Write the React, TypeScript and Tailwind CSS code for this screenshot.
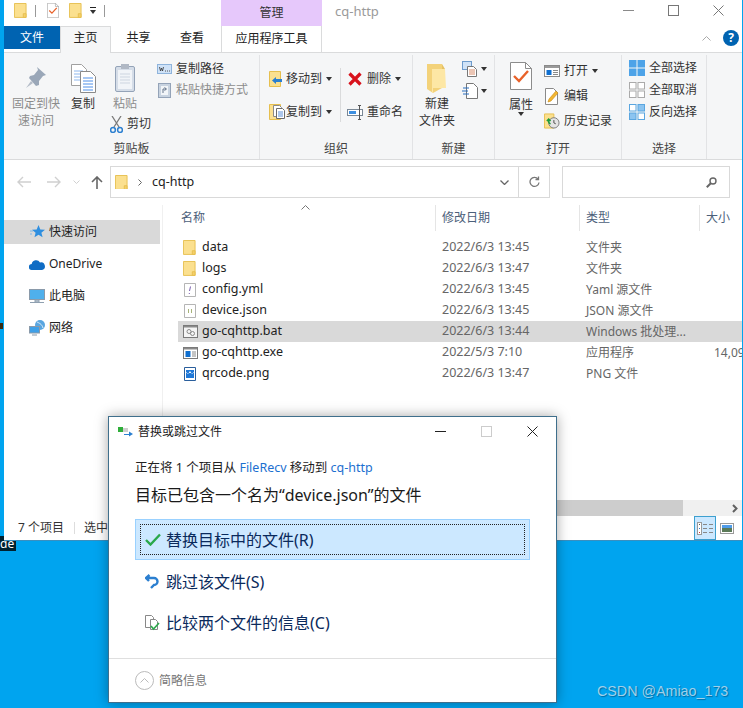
import type { ReactNode } from "react";

const sans = "font-['Noto_Sans','Noto_Sans_CJK_SC',sans-serif]";

function Folder({ size = 14 }: { size?: number }) {
  return (
    <svg width={size} height={size * 1.15} viewBox="0 0 14 16" className="shrink-0">
      <path d="M.5.5h12.5v15H.5z" fill="#fbe08f" stroke="#e6bf4f" />
      <path d="M10 11.5h3v4h-3z" fill="#f5d06a" stroke="#e6bf4f" />
    </svg>
  );
}

function PropsDoc({ w = 22, h = 28 }: { w?: number; h?: number }) {
  return (
    <svg width={w} height={h} viewBox="0 0 22 28" className="shrink-0">
      <path d="M.5.5h15l6 6v21H.5z" fill="#fff" stroke="#8c8c8c" />
      <path d="M15.5.5v6h6" fill="none" stroke="#8c8c8c" />
      <path d="M4 14l5 5 9-10" fill="none" stroke="#e8622a" strokeWidth="2.4" />
    </svg>
  );
}

function Caret() {
  return <span className="inline-block w-0 h-0 border-x-[3.5px] border-x-transparent border-t-[4px] border-t-[#333]" />;
}

function WinBtn({ kind, color }: { kind: "min" | "max" | "close"; color: string }) {
  return (
    <svg width="11" height="11" viewBox="0 0 11 11" fill="none" stroke={color}>
      {kind === "min" && <path d="M0 5.5h11" />}
      {kind === "max" && <rect x=".5" y=".5" width="10" height="10" />}
      {kind === "close" && <path d="M.5.5l10 10M10.5.5l-10 10" />}
    </svg>
  );
}

function Group({ width, label, children }: { width: string; label: string; children: ReactNode }) {
  return (
    <div className={`flex flex-col shrink-0 border-r border-[#e2e3e5] mt-[2px] ${width}`}>
      <div className="h-[84px] flex">{children}</div>
      <div className="h-[20px] leading-[20px] text-center text-[#444]">{label}</div>
    </div>
  );
}

function Big({ icon, lines, disabled, className = "" }: { icon: ReactNode; lines: string[]; disabled?: boolean; className?: string }) {
  return (
    <div className={`flex flex-col items-center shrink-0 pt-[7px] ${className}`}>
      <div className="h-[32px] flex items-center justify-center">{icon}</div>
      <div className={`mt-[1px] text-center leading-[17px] whitespace-nowrap ${disabled ? "text-[#8c8c8c]" : "text-[#333]"}`}>
        {lines.map((l) => (
          <div key={l}>{l}</div>
        ))}
      </div>
    </div>
  );
}

function Small({ icon, label, caret, disabled, tight }: { icon: ReactNode; label: string; caret?: boolean; disabled?: boolean; tight?: boolean }) {
  return (
    <div className={`flex items-center gap-[4px] h-[20px] whitespace-nowrap ${disabled ? "text-[#8c8c8c]" : "text-[#333]"}`}>
      <span className={`w-[16px] flex justify-center shrink-0 ${tight ? "-mr-[3px]" : ""}`}>{icon}</span>
      <span>{label}</span>
      {caret && (
        <span className="flex">
          <Caret />
        </span>
      )}
    </div>
  );
}

const PinIcon = (
  <svg width="22" height="24" viewBox="0 0 22 24">
    <path d="M12 1l9 8-3 1-4 5 0 4-3 1-7-8 1-2 4-1 4-5z" fill="#9aa7b8" />
    <path d="M6 15l-5 7 7-5z" fill="#b4bcc8" />
  </svg>
);

const CopyIcon = (
  <svg width="25" height="29" viewBox="0 0 25 29">
    <path d="M.5.5h10l5 5v16H.5z" fill="#fff" stroke="#a0a0a0" />
    <path d="M3 7h9M3 10h9M3 13h9M3 16h9" stroke="#8fb8ee" />
    <path d="M9.5 7.5h10l5 5v16h-15z" fill="#fff" stroke="#8a8a8a" />
    <path d="M12 14h10M12 17h10M12 20h10M12 23h10M12 26h10" stroke="#4f8fe8" />
  </svg>
);

const PasteIcon = (
  <svg width="20" height="30" viewBox="0 0 20 30">
    <rect x=".5" y="3.5" width="19" height="25" rx="1.5" fill="#d5dde8" stroke="#94a3b8" />
    <rect x="3" y="7" width="14" height="19" fill="#f1f4f8" />
    <path d="M5 11h10M5 14h10M5 17h10M5 20h10" stroke="#cdd5e0" />
    <rect x="6" y="1" width="8" height="5" fill="#b0b8c4" />
  </svg>
);

const Scissors = (
  <svg width="13" height="17" viewBox="0 0 13 17" fill="none" className="shrink-0">
    <path d="M2 0l7 11M11 0L4 11" stroke="#7a7a7a" strokeWidth="1.3" />
    <circle cx="3" cy="14" r="2.4" stroke="#2b7fd0" strokeWidth="1.5" />
    <circle cx="10" cy="14" r="2.4" stroke="#2b7fd0" strokeWidth="1.5" />
  </svg>
);

const PathIcon = (
  <svg width="15" height="10" viewBox="0 0 15 10">
    <rect x=".5" y=".5" width="14" height="9" fill="#cfe2f7" stroke="#8fb4dc" />
    <path d="M2.5 3l1 4 1-3 1 3 1-4M8 7h1M10 7h1M12 7h1" stroke="#333" strokeWidth=".8" fill="none" />
  </svg>
);

const ShortcutIcon = (
  <svg width="13" height="16" viewBox="0 0 13 16">
    <rect x=".5" y="1.5" width="12" height="14" fill="#c8d3e0" stroke="#94a3b8" />
    <rect x="3" y="4" width="7" height="9" fill="#f2f5f8" />
    <path d="M5 11V7h3M6.5 5.5L8.5 7 6.5 8.5" stroke="#64748b" fill="none" />
  </svg>
);

const MoveIcon = (
  <svg width="16" height="16" viewBox="0 0 16 16">
    <path d="M.5.5h11v15H.5z" fill="#fbe08f" stroke="#e6bf4f" />
    <path d="M13 8H7V6l-4 3.5L7 13v-2h6z" fill="#2b7fd0" />
  </svg>
);

const CopyToIcon = (
  <svg width="16" height="16" viewBox="0 0 16 16">
    <path d="M.5.5h11v15H.5z" fill="#fbe08f" stroke="#e6bf4f" />
    <path d="M4.5 1.5h6l2 2v9h-8z" fill="#fff" stroke="#8a8a8a" />
    <path d="M7.5 4.5h6l2 2v8h-8z" fill="#fff" stroke="#6b6b6b" />
    <path d="M9 8h5M9 10h5M9 12h5" stroke="#5a8fd8" />
  </svg>
);

const DeleteIcon = (
  <svg width="14" height="14" viewBox="0 0 14 14">
    <path d="M1.5 1.5l11 11M12.5 1.5l-11 11" stroke="#d8121c" strokeWidth="3.2" />
  </svg>
);

const RenameIcon = (
  <svg width="16" height="15" viewBox="0 0 16 15">
    <rect x=".5" y="4.5" width="15" height="6" fill="#fff" stroke="#7a8896" />
    <rect x="2" y="6" width="7" height="3" fill="#3d8fe0" />
    <path d="M11 .5h3M12.5.5v14M11 14.5h3" stroke="#555" fill="none" />
  </svg>
);

const BigFolder = (
  <svg width="20" height="29" viewBox="0 0 20 29">
    <path d="M0 0h15v24L6 29 0 25z" fill="#f3d27a" />
    <path d="M5 5h13l1 19H6v5l-1-1z" fill="#fde7a5" />
    <path d="M15 0l3 5h-3z" fill="#e6c264" />
  </svg>
);

const NewItemIcon = (
  <svg width="16" height="16" viewBox="0 0 16 16">
    <rect x=".5" y=".5" width="9" height="8" fill="#cfe2f7" stroke="#6d9bcc" />
    <path d="M5.5 5.5h6l3 3v7h-9z" fill="#fff" stroke="#777" />
    <path d="M7 9h6M7 11h6M7 13h6" stroke="#d88c6a" />
  </svg>
);

const EasyAccessIcon = (
  <svg width="16" height="16" viewBox="0 0 16 16">
    <path d="M4.5.5h7l4 4v11h-11z" fill="#fff" stroke="#777" />
    <path d="M1 5h6M0 8h6M1 11h6" stroke="#2b6fc0" strokeWidth="1.2" />
  </svg>
);

const OpenIcon = (
  <svg width="16" height="12" viewBox="0 0 16 12">
    <rect x=".5" y=".5" width="15" height="11" fill="#fff" stroke="#8a8a8a" />
    <path d="M1 1h14v2H1z" fill="#9a9a9a" />
    <rect x="2.5" y="5" width="5" height="5" fill="#0f6fd0" />
    <path d="M9 5.5h5M9 7.5h5M9 9.5h5" stroke="#8a8a8a" />
  </svg>
);

const EditIcon = (
  <svg width="14" height="17" viewBox="0 0 14 17">
    <path d="M.5.5h8l4 4v12H.5z" fill="#fff" stroke="#8a8a8a" />
    <path d="M3 14l1-3 7-8 2 2-7 8z" fill="#f2b632" stroke="#c98a12" strokeWidth=".6" />
  </svg>
);

const HistoryIcon = (
  <svg width="17" height="16" viewBox="0 0 17 16">
    <path d="M.5.5h10v15H.5z" fill="#fbe08f" stroke="#e6bf4f" />
    <circle cx="10.5" cy="10" r="5.5" fill="#e4e4e4" stroke="#7a7a7a" />
    <path d="M10.5 7v3l2 1" stroke="#444" fill="none" />
    <path d="M7 11a3 3 0 0 1-2-4M3 8l2-2 2 2" stroke="#1f9d3a" strokeWidth="1.6" fill="none" />
  </svg>
);

function Grid4({ fills, stroke }: { fills: string[]; stroke: string }) {
  return (
    <svg width="16" height="16" viewBox="0 0 16 16">
      {[
        [0.5, 0.5],
        [9, 0.5],
        [0.5, 9],
        [9, 9],
      ].map(([x, y], i) => (
        <rect key={i} x={x} y={y} width="6.5" height="6.5" fill={fills[i]} stroke={stroke} />
      ))}
    </svg>
  );
}

function FileIcon({ kind }: { kind: string }) {
  if (kind === "folder") return <Folder size={13} />;
  if (kind === "yml" || kind === "json")
    return (
      <svg width="12" height="14" viewBox="0 0 12 14" className="shrink-0 ml-[1px]">
        <path d="M.5.5h11v13H.5z" fill="#fff" stroke="#b5b5b5" />
        {kind === "yml" ? (
          <path d="M6.5 3.5L5.5 8M5.3 10v1" stroke="#7a5fb0" fill="none" />
        ) : (
          <path d="M4.5 5v4M7.5 5v4" stroke="#a8b37a" fill="none" />
        )}
      </svg>
    );
  if (kind === "bat")
    return (
      <svg width="15" height="13" viewBox="0 0 15 13" className="shrink-0">
        <rect x=".5" y=".5" width="14" height="12" fill="#f4f4f4" stroke="#7a7a7a" />
        <path d="M1 1h13v1.5H1z" fill="#8a8a8a" />
        <circle cx="6" cy="6.5" r="2" fill="none" stroke="#8a8a8a" />
        <circle cx="9.5" cy="8.5" r="2" fill="none" stroke="#8a8a8a" />
      </svg>
    );
  if (kind === "exe")
    return (
      <svg width="15" height="12" viewBox="0 0 15 12" className="shrink-0">
        <rect x=".5" y=".5" width="14" height="11" fill="#fff" stroke="#7a7a7a" />
        <path d="M1 1h13v1.5H1z" fill="#8a8a8a" />
        <rect x="2.5" y="4" width="5" height="6" fill="#0f6fd0" />
        <path d="M9 5h4M9 7h4M9 9h4" stroke="#8a8a8a" />
      </svg>
    );
  return (
    <svg width="12" height="14" viewBox="0 0 12 14" className="shrink-0 ml-[1px]">
      <path d="M.5.5h11v13H.5z" fill="#fff" stroke="#2a5f9c" />
      <rect x="2" y="3" width="8" height="8" fill="#1f78d8" />
      <path d="M2 5l2 2 2-3 2 3 2-2v1H2z" fill="#fff" />
    </svg>
  );
}

const files = [
  { name: "data", kind: "folder", date: "2022/6/3 13:45", type: "文件夹", size: "" },
  { name: "logs", kind: "folder", date: "2022/6/3 13:47", type: "文件夹", size: "" },
  { name: "config.yml", kind: "yml", date: "2022/6/3 13:45", type: "Yaml 源文件", size: "" },
  { name: "device.json", kind: "json", date: "2022/6/3 13:45", type: "JSON 源文件", size: "" },
  { name: "go-cqhttp.bat", kind: "bat", date: "2022/6/3 13:44", type: "Windows 批处理...", size: "" },
  { name: "go-cqhttp.exe", kind: "exe", date: "2022/5/3 7:10", type: "应用程序", size: "14,09" },
  { name: "qrcode.png", kind: "png", date: "2022/6/3 13:47", type: "PNG 文件", size: "" },
];

const sideItems = [
  {
    label: "快速访问",
    active: true,
    icon: (
      <svg width="15" height="14" viewBox="0 0 15 14">
        <path d="M8.5 0l1.8 4.4 4.7.3-3.6 3 1.2 4.6-4.1-2.5-4 2.5 1.1-4.6L2 4.7l4.7-.3z" fill="#2f8fe0" />
        <path d="M0 6h3M0 9h2" stroke="#7db8ea" />
      </svg>
    ),
  },
  {
    label: "OneDrive",
    icon: (
      <svg width="16" height="11" viewBox="0 0 16 11">
        <path d="M3 11a3 3 0 0 1-.3-6A4.5 4.5 0 0 1 11 3.5 3.7 3.7 0 0 1 13 11z" fill="#0f6cc4" />
      </svg>
    ),
  },
  {
    label: "此电脑",
    icon: (
      <svg width="16" height="15" viewBox="0 0 16 15">
        <rect x=".5" y=".5" width="15" height="10" fill="#4fb0ec" stroke="#8a9aaa" />
        <path d="M6 11h4v2H6zM1 13.5h14" stroke="#8fa0b0" fill="#c4ced8" />
      </svg>
    ),
  },
  {
    label: "网络",
    icon: (
      <svg width="16" height="16" viewBox="0 0 16 16">
        <circle cx="11" cy="5" r="5" fill="#5aa6e0" />
        <path d="M8 2c2 1 5 2 6 6" stroke="#e4f0fa" fill="none" />
        <rect x=".5" y="6.5" width="10" height="6.5" fill="#3fa0e8" stroke="#8a9aaa" />
        <path d="M3 15h5" stroke="#8a9aaa" />
      </svg>
    ),
  },
];

function Explorer() {
  return (
    <div className="absolute left-[4px] top-0 w-[738px] h-[541px] bg-white flex flex-col overflow-hidden border-b border-[#3a8fbf] text-[12px]">
      {/* title bar */}
      <div className="h-[26px] flex items-start shrink-0">
        <div className="flex items-center pl-[10px] pt-[3px] w-[217px]">
          <Folder size={13} />
          <span className="ml-[8px] w-px h-[12px] bg-[#999]" />
          <span className="ml-[11px] flex">
            <PropsDoc w={12} h={15} />
          </span>
          <span className="ml-[10px] flex">
            <Folder size={13} />
          </span>
          <span className="ml-[8px] flex flex-col items-center gap-[2px]">
            <span className="w-[6px] h-px bg-[#222]" />
            <Caret />
          </span>
          <span className="ml-[8px] w-px h-[12px] bg-[#999]" />
        </div>
        <div className="w-[101px] h-[26px] bg-[#e6c8fb] text-center leading-[25px] text-[#333]">管理</div>
        <div className="ml-[13px] leading-[23px] text-[#9a9a9a] text-[13px] flex-1">cq-http</div>
        <div className="flex items-center gap-[34px] pt-[5px] pr-[18px]">
          <WinBtn kind="min" color="#8a8a8a" />
          <WinBtn kind="max" color="#777" />
          <WinBtn kind="close" color="#777" />
        </div>
      </div>

      {/* tabs */}
      <div className="h-[27px] shrink-0 flex items-start border-b border-[#dadbdc] relative">
        <div className="w-[56px] h-[23px] bg-[#0063b1] text-white text-center leading-[23px]">文件</div>
        <div className="w-[51px] h-[27px] bg-[#f5f6f7] border-x border-t border-[#dadbdc] text-center leading-[22px] text-[#222] z-10">主页</div>
        <div className="w-[55px] text-center leading-[23px] text-[#222]">共享</div>
        <div className="w-[52px] text-center leading-[23px] text-[#222]">查看</div>
        <div className="ml-[3px] w-[101px] h-[26px] border-x border-[#dadbdc] text-center leading-[25px] text-[#222]">应用程序工具</div>
        <div className="ml-auto flex items-center gap-[12px] pr-[3px] pt-[4px]">
          <svg width="9" height="5" viewBox="0 0 9 5" fill="none" stroke="#aaa">
            <path d="M.5 4.5l4-4 4 4" />
          </svg>
          <span className="w-[16px] h-[16px] rounded-full bg-[#0063b1] text-white font-bold text-[12px] leading-[16px] text-center">?</span>
        </div>
      </div>

      {/* ribbon */}
      <div className="h-[107px] shrink-0 bg-[#f5f6f7] border-b border-[#dadbdc] flex">
        <Group width="w-[256px]" label="剪贴板">
          <Big className="ml-[8px] w-[48px]" icon={PinIcon} lines={["固定到快", "速访问"]} disabled />
          <Big className="ml-[8px] w-[30px]" icon={CopyIcon} lines={["复制"]} />
          <div className="ml-[8px] w-[38px] shrink-0">
            <Big icon={PasteIcon} lines={["粘贴"]} disabled />
            <div className="pl-[4px] mt-[3px]">
              <div className="flex items-center gap-[4px] whitespace-nowrap text-[#333]">
                {Scissors}
                <span>剪切</span>
              </div>
            </div>
          </div>
          <div className="ml-[12px] pt-[4px] flex flex-col gap-[1px]">
            <Small icon={PathIcon} label="复制路径" />
            <Small icon={ShortcutIcon} label="粘贴快捷方式" disabled />
          </div>
        </Group>

        <Group width="w-[153px]" label="组织">
          <div className="ml-[9px] pt-[14px] w-[71px] flex flex-col gap-[13px]">
            <Small icon={MoveIcon} label="移动到" caret tight />
            <Small icon={CopyToIcon} label="复制到" caret tight />
          </div>
          <div className="mt-[13px] mb-[17px] w-px bg-[#dadbdc]" />
          <div className="ml-[6px] pt-[14px] flex flex-col gap-[13px]">
            <Small icon={DeleteIcon} label="删除" caret />
            <Small icon={RenameIcon} label="重命名" />
          </div>
        </Group>

        <Group width="w-[82px]" label="新建">
          <Big className="ml-[6px] w-[36px]" icon={BigFolder} lines={["新建", "文件夹"]} />
          <div className="ml-[7px] pt-[6px] flex flex-col gap-[6px]">
            <div className="flex items-center gap-[3px] h-[16px]">
              {NewItemIcon}
              <Caret />
            </div>
            <div className="flex items-center gap-[3px] h-[16px]">
              {EasyAccessIcon}
              <Caret />
            </div>
          </div>
        </Group>

        <Group width="w-[127px]" label="打开">
          <div className="ml-[14px] w-[24px] flex flex-col items-center pt-[7px] shrink-0">
            <PropsDoc />
            <div className="mt-[8px] text-[#333] leading-[14px] whitespace-nowrap">属性</div>
            <Caret />
          </div>
          <div className="ml-[11px] pt-[6px] flex flex-col gap-[5px]">
            <Small icon={OpenIcon} label="打开" caret />
            <Small icon={EditIcon} label="编辑" />
            <Small icon={HistoryIcon} label="历史记录" />
          </div>
        </Group>

        <Group width="w-[85px]" label="选择">
          <div className="ml-[7px] pt-[3px] flex flex-col gap-[2px]">
            <Small icon={<Grid4 fills={["#4da3e8", "#4da3e8", "#4da3e8", "#4da3e8"]} stroke="#4da3e8" />} label="全部选择" />
            <Small icon={<Grid4 fills={["#fff", "#fff", "#fff", "#fff"]} stroke="#aaa" />} label="全部取消" />
            <Small icon={<Grid4 fills={["#fff", "#8cc4f0", "#8cc4f0", "#fff"]} stroke="#5aa6e0" />} label="反向选择" />
          </div>
        </Group>
      </div>

      {/* nav bar */}
      <div className="h-[32px] mt-[6px] shrink-0 flex items-center">
        <svg width="14" height="12" viewBox="0 0 14 12" fill="none" stroke="#d0d0d0" strokeWidth="1.4" className="ml-[13px]">
          <path d="M14 6H1M6 1L1 6l5 5" />
        </svg>
        <svg width="14" height="12" viewBox="0 0 14 12" fill="none" stroke="#d0d0d0" strokeWidth="1.4" className="ml-[16px]">
          <path d="M0 6h13M8 1l5 5-5 5" />
        </svg>
        <svg width="7" height="4" viewBox="0 0 7 4" fill="none" stroke="#d0d0d0" className="ml-[12px]">
          <path d="M.5.5l3 3 3-3" />
        </svg>
        <svg width="12" height="13" viewBox="0 0 12 13" fill="none" stroke="#666" strokeWidth="1.6" className="ml-[11px]">
          <path d="M6 13V1M1 6l5-5 5 5" />
        </svg>
        <div className="ml-[7px] w-[440px] h-[32px] border border-[#d9d9d9] flex items-center">
          <span className="ml-[4px] flex">
            <Folder size={13} />
          </span>
          <svg width="4" height="7" viewBox="0 0 4 7" fill="none" stroke="#666" className="ml-[10px]">
            <path d="M.5.5l3 3-3 3" />
          </svg>
          <span className="ml-[10px] text-[#222] text-[12.5px] flex-1">cq-http</span>
          <svg width="9" height="5" viewBox="0 0 9 5" fill="none" stroke="#666" strokeWidth="1.3" className="mr-[9px]">
            <path d="M.5.5l4 4 4-4" />
          </svg>
          <div className="w-[31px] h-full border-l border-[#d9d9d9] flex items-center justify-center">
            <svg width="11" height="12" viewBox="0 0 11 12" fill="none" stroke="#777" strokeWidth="1.3">
              <path d="M9 3a4.5 4.5 0 1 0 1 3.5M9.5.5V3.5H6.5" />
            </svg>
          </div>
        </div>
        <div className="ml-[12px] w-[168px] h-[32px] border border-[#d9d9d9] flex items-center justify-end pr-[12px]">
          <svg width="11" height="11" viewBox="0 0 11 11" fill="none" stroke="#666" strokeWidth="1.4">
            <circle cx="7" cy="4" r="3" />
            <path d="M4.8 6.2L.8 10.2" strokeWidth="2" />
          </svg>
        </div>
      </div>

      {/* main */}
      <div className="flex flex-1 min-h-0 mt-[7px]">
        <div className="w-[159px] shrink-0 pt-[15px] border-r border-[#f0f0f0] flex flex-col gap-[8px]">
          {sideItems.map((s) => (
            <div key={s.label} className={`h-[24px] flex items-center w-[156px] ${s.active ? "bg-[#d9d9d9]" : ""}`}>
              <span className="ml-[25px] w-[16px] flex justify-center">{s.icon}</span>
              <span className="ml-[4px] text-[#222]">{s.label}</span>
            </div>
          ))}
        </div>
        <div className="flex-1 min-w-0 flex flex-col pl-[15px]">
          <div className="h-[26px] grid grid-cols-[257px_144px_120px_1fr] text-[#4c607a] shrink-0 relative">
            <div className="pl-[3px] leading-[26px]">名称</div>
            <svg width="9" height="5" viewBox="0 0 9 5" fill="none" stroke="#777" className="absolute left-[123px] top-0">
              <path d="M.5 4.5l4-4 4 4" />
            </svg>
            <div className="pl-[6px] border-l border-[#e5e5e5] leading-[26px]">修改日期</div>
            <div className="pl-[6px] border-l border-[#e5e5e5] leading-[26px]">类型</div>
            <div className="pl-[6px] border-l border-[#e5e5e5] leading-[26px]">大小</div>
          </div>
          <div className="mt-[6px] flex flex-col">
            {files.map((f) => (
              <div
                key={f.name}
                className={`h-[21px] grid grid-cols-[257px_144px_120px_1fr] items-center whitespace-nowrap ${f.kind === "bat" ? "bg-[#d9d9d9]" : ""}`}
              >
                <div className="flex items-center pl-[5px]">
                  <span className="w-[19px] flex shrink-0">
                    <FileIcon kind={f.kind} />
                  </span>
                  <span className="text-[#222] text-[12.5px]">{f.name}</span>
                </div>
                <div className="pl-[7px] text-[#666] text-[12.5px]">{f.date}</div>
                <div className="pl-[7px] text-[#666]">{f.type}</div>
                <div className="pl-[15px] text-[#666] overflow-hidden">{f.size}</div>
              </div>
            ))}
          </div>
          <div className="mt-auto h-[16px] flex bg-[#f0f0f0] shrink-0">
            <div className="w-[505px] bg-[#cdcdcd]" />
            <div className="ml-auto pr-[4px] flex items-center">
              <svg width="6" height="9" viewBox="0 0 6 9" fill="none" stroke="#606060" strokeWidth="2">
                <path d="M1 1l3.5 3.5L1 8" />
              </svg>
            </div>
          </div>
        </div>
      </div>

      {/* status bar */}
      <div className="h-[24px] shrink-0 flex items-center text-[#333]">
        <span className="ml-[14px]">7 个项目</span>
        <span className="ml-[10px] w-px h-[12px] bg-[#ddd]" />
        <span className="ml-[9px]">选中</span>
        <div className="ml-auto flex items-center h-full pr-[8px]">
          <div className="w-[22px] h-full bg-[#cce8ff] border border-[#3da0d0] flex items-center justify-center">
            <svg width="16" height="13" viewBox="0 0 16 13">
              <rect x=".5" y=".5" width="4" height="12" fill="#fff" stroke="#999" />
              <path d="M2 2.5h1" stroke="#555" />
              <path d="M2 6.5h1" stroke="#2b7fd0" />
              <path d="M2 10.5h1" stroke="#d03030" />
              <path d="M6 2.5h4M12 2.5h4M6 6.5h4M12 6.5h4M6 10.5h4M12 10.5h4" stroke="#888" />
            </svg>
          </div>
          <div className="ml-[4px]">
            <svg width="14" height="11" viewBox="0 0 14 11">
              <rect x=".5" y=".5" width="13" height="10" fill="#fff" stroke="#999" />
              <rect x="2" y="2" width="10" height="3" fill="#4f9be8" />
              <rect x="2" y="5" width="10" height="4" fill="#5b7a58" />
            </svg>
          </div>
        </div>
      </div>
    </div>
  );
}

function Dialog() {
  return (
    <div className="absolute left-[108px] top-[416px] w-[449px] h-[287px] bg-white border border-[#3f6f8c] shadow-[0_0_12px_rgba(0,0,0,0.35)] flex flex-col text-[12px]">
      <div className="h-[29px] shrink-0 flex items-center">
        <svg width="15" height="10" viewBox="0 0 15 10" className="ml-[9px]">
          <rect x="0" y="0" width="5" height="5" fill="#2fae3a" />
          <rect x="5" y="1" width="5" height="4" fill="#cfcfcf" />
          <path d="M6 7h5V4.5L15 7l-4 2.5V8H6z" fill="#2b7fd0" />
        </svg>
        <span className="ml-[5px] text-[#222]">替换或跳过文件</span>
        <div className="ml-auto flex items-center gap-[35px] pr-[18px]">
          <WinBtn kind="min" color="#222" />
          <WinBtn kind="max" color="#ccc" />
          <WinBtn kind="close" color="#222" />
        </div>
      </div>
      <div className="pl-[26px] pr-[26px] pt-[13px] flex flex-col flex-1">
        <div className="h-[18px] leading-[18px] text-[12.5px] text-[#222] whitespace-nowrap">
          正在将 1 个项目从 <span className="text-[#1c6fd0]">FileRecv</span> 移动到 <span className="text-[#1c6fd0]">cq-http</span>
        </div>
        <div className="mt-[7px] h-[22px] leading-[22px] text-[16px] text-[#1a1a1a] whitespace-nowrap">目标已包含一个名为“device.json”的文件</div>
        <div className="mt-[13px] h-[41px] bg-[#cce8ff] border border-[#99d1ff] p-[4px]">
          <div className="h-full border border-dotted border-[#222] flex items-center pl-[4px] text-[16px] text-[#0a2a5c]">
            <svg width="16" height="13" viewBox="0 0 16 13" fill="none" stroke="#2aa84a" strokeWidth="2.4">
              <path d="M1 7l4.5 4.5L15 1.5" />
            </svg>
            <span className="ml-[5px]">替换目标中的文件(R)</span>
          </div>
        </div>
        <div className="mt-[1px] h-[41px] flex items-center pl-[10px] text-[16px] text-[#0a2a5c]">
          <svg width="14" height="15" viewBox="0 0 14 15" fill="none" stroke="#2b7fd0" strokeWidth="2.4">
            <path d="M1 4h8a3.5 3.5 0 0 1 0 7L6 14M4.5 1L1 4l3 3" />
          </svg>
          <span className="ml-[7px]">跳过该文件(S)</span>
        </div>
        <div className="h-[41px] flex items-center pl-[10px] text-[16px] text-[#0a2a5c]">
          <svg width="15" height="16" viewBox="0 0 15 16" fill="none">
            <path d="M.5.5h6l2 2v10h-8z" fill="#fff" stroke="#888" />
            <path d="M5.5 4.5h5l2 2v8h-7z" fill="#fff" stroke="#888" />
            <path d="M6 11l2.5 3L14 8" stroke="#2aa84a" strokeWidth="1.6" />
          </svg>
          <span className="ml-[6px]">比较两个文件的信息(C)</span>
        </div>
      </div>
      <div className="h-[44px] shrink-0 border-t border-[#dfdfdf] flex items-center pl-[26px]">
        <svg width="19" height="19" viewBox="0 0 19 19" fill="none" stroke="#bbb">
          <circle cx="9.5" cy="9.5" r="9" />
          <path d="M5.5 11.5l4-4 4 4" />
        </svg>
        <span className="ml-[5px] text-[#777]">简略信息</span>
      </div>
    </div>
  );
}

export default function App() {
  return (
    <div className={`relative w-[743px] h-[708px] overflow-hidden bg-[#00a4ef] ${sans}`}>
      <span className="absolute left-0 top-[536px] bg-black/80 text-white text-[12px] leading-[15px] pr-[2px]">de</span>
      <span className="absolute left-0 top-[323px] w-[3px] h-[6px] bg-[#3a2a10]" />
      <Explorer />
      <Dialog />
      <div className="absolute left-[597px] top-[683px] text-[14.3px] leading-[16px] text-[#9fd0ea] font-['Liberation_Sans',sans-serif] [text-shadow:1px_1px_1px_rgba(0,70,110,0.6)]">
        CSDN @Amiao_173
      </div>
    </div>
  );
}
